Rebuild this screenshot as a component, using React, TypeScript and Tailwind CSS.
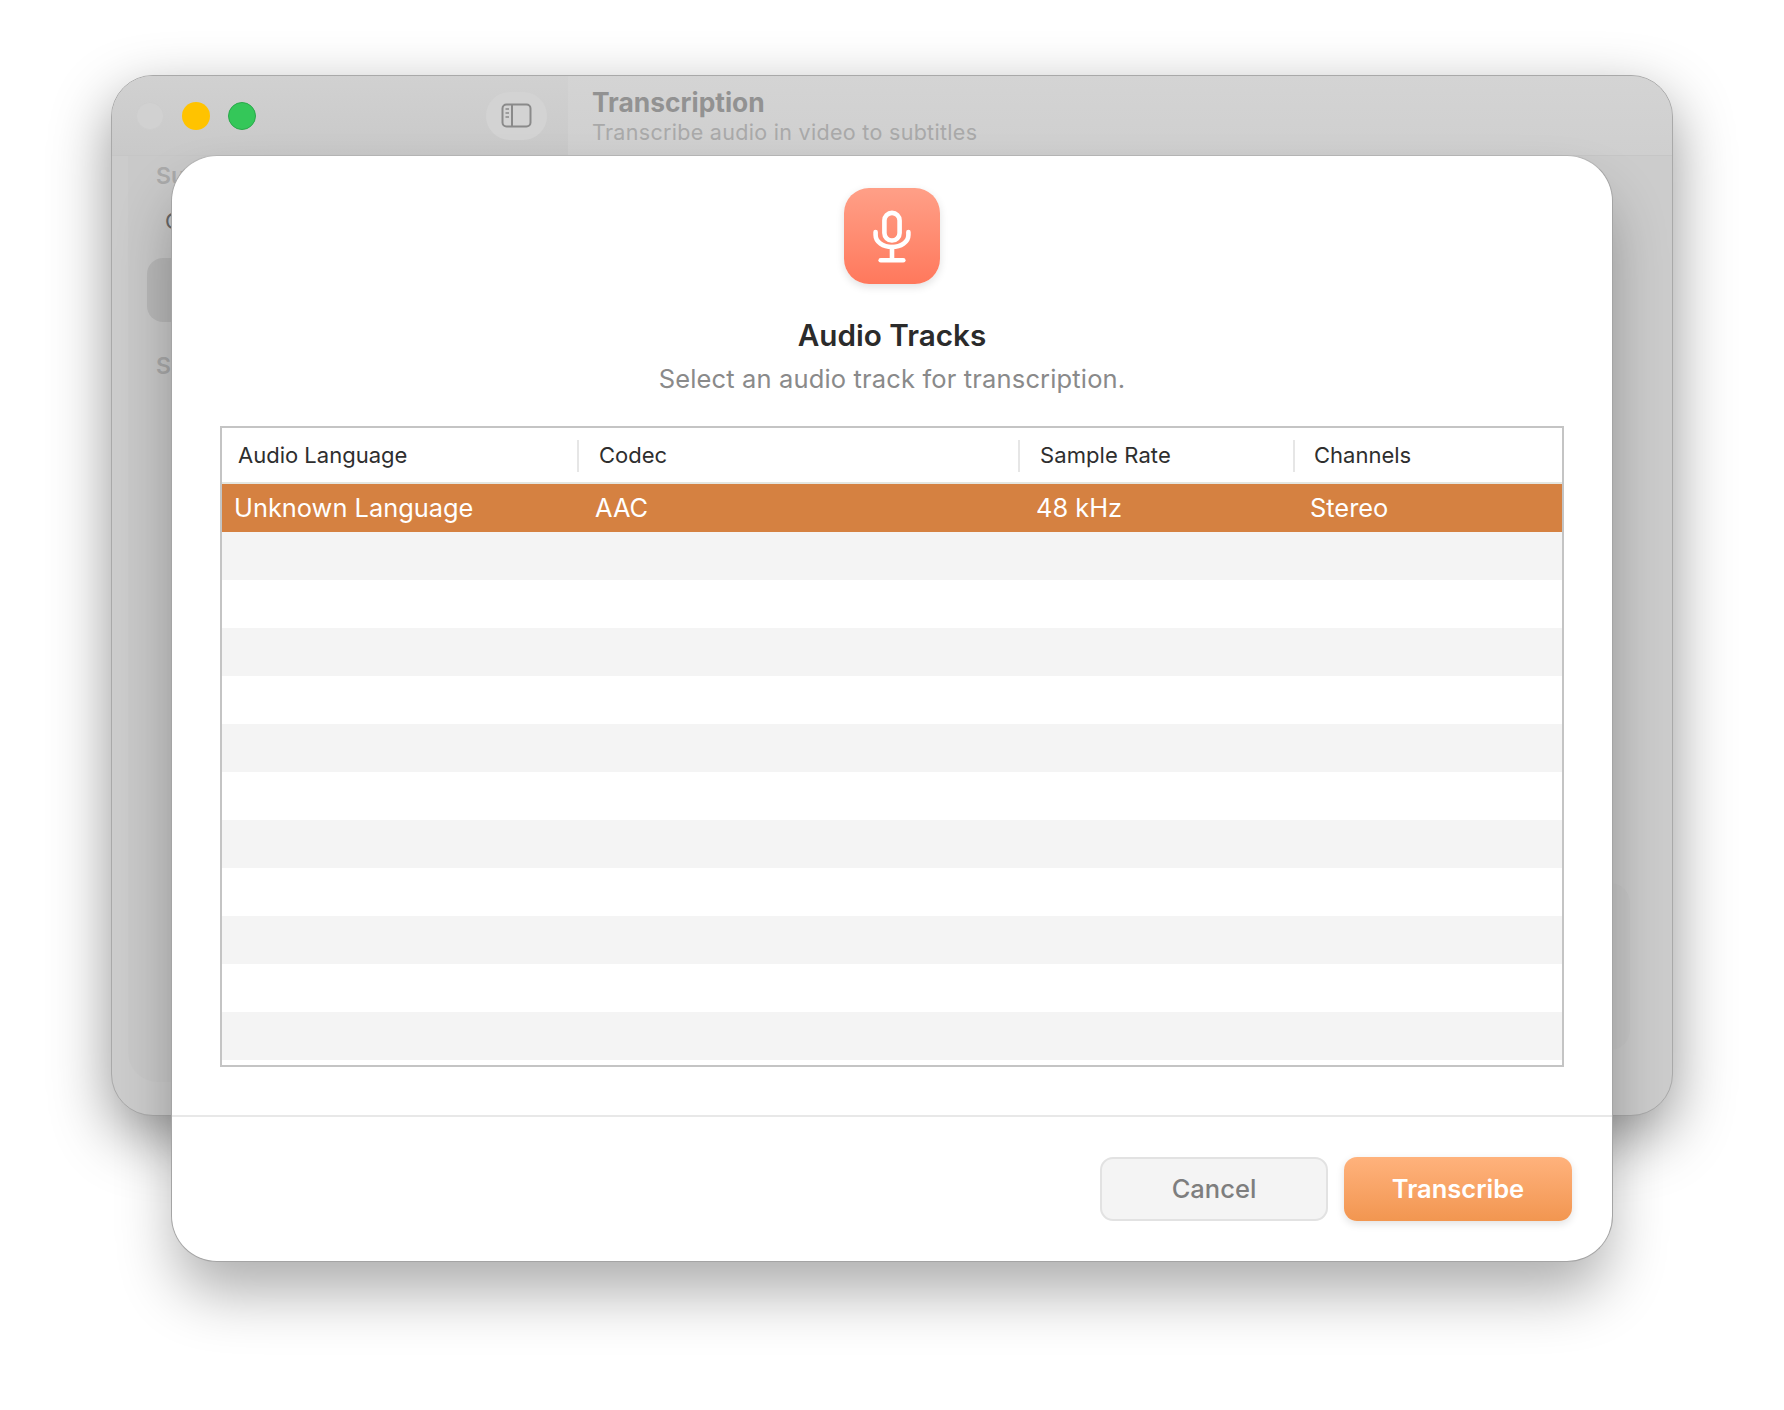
export default function App() {
  const rows = Array.from({ length: 11 }, (_, i) => i);
  return (
    <div className="w-[1784px] h-[1410px] bg-white flex justify-center pt-[75px] font-['Inter','Liberation_Sans',sans-serif]">
      <div className="relative w-[1562px] h-[1041px]">
        {/* Background window */}
        <div className="w-full h-full flex flex-col rounded-[42px] overflow-hidden bg-[#cccccc] border border-[#a9a9a9] shadow-[0_22px_60px_rgba(0,0,0,0.42)]">
          <div className="h-[80px] shrink-0 flex bg-linear-to-b from-[#d4d4d4] to-[#cfcfcf] border-b border-[#c6c6c6]">
            <div className="w-[456px] shrink-0 flex items-center pl-[24px] bg-linear-to-b from-[#d1d1d1] to-[#c9c9c9]">
              <div className="flex gap-[18px]">
                <div className="w-[28px] h-[28px] rounded-full bg-[#d1d1d1] border border-[#cdcdcd]" />
                <div className="w-[28px] h-[28px] rounded-full bg-[#ffc300]" />
                <div className="w-[28px] h-[28px] rounded-full bg-[#34c759] border border-[#2aa84a]" />
              </div>
              <div className="ml-[230px] w-[61px] h-[48px] rounded-full bg-[#d3d3d3] flex items-center justify-center">
                <svg width="31" height="25" viewBox="0 0 31 25" fill="none" stroke="#8a8a8a" strokeWidth="2">
                  <rect x="1.5" y="1.5" width="28" height="22" rx="4" />
                  <line x1="11" y1="1.5" x2="11" y2="23.5" />
                  <line x1="4.5" y1="6" x2="8" y2="6" strokeWidth="1.5" />
                  <line x1="4.5" y1="10" x2="8" y2="10" strokeWidth="1.5" />
                  <line x1="4.5" y1="14" x2="8" y2="14" strokeWidth="1.5" />
                </svg>
              </div>
            </div>
            <div className="flex-1 pl-[24px] pt-[10px]">
              <div className="text-[26.4px] leading-[32px] font-bold text-[#929292]">Transcription</div>
              <div className="mt-[1px] text-[21.5px] leading-[26px] text-[#a9a9a9] tracking-[0.3px]">Transcribe audio in video to subtitles</div>
            </div>
          </div>
          <div className="flex-1 flex min-h-0">
            <div className="w-[456px] shrink-0 pl-[16px] pb-[33px] flex">
              <div className="flex-1 rounded-bl-[30px] bg-[#c9c9c9] pl-[28px] pt-[6px] flex flex-col">
                <div className="text-[23px] leading-[28px] font-semibold text-[#aaaaaa]">Subtitles</div>
                <div className="mt-[17px] pl-[9px] text-[22px] leading-[28px] text-[#666666]">Current</div>
                <div className="-ml-[9px] mt-[23px] h-[64px] rounded-[16px] bg-[#b9b9b9]" />
                <div className="mt-[30px] text-[23px] leading-[28px] font-semibold text-[#aaaaaa]">Source</div>
              </div>
            </div>
            <div className="flex-1 flex flex-col justify-end items-end pr-[42px] pb-[65px]">
              <div className="w-[300px] h-[167px] rounded-[20px] bg-[#c9c9c9]" />
            </div>
          </div>
        </div>

        {/* Sheet */}
        <div className="absolute left-[60px] top-[80px] w-[1442px] h-[1107px] flex flex-col rounded-[46px] bg-white border border-[#a4a4a4] border-t-[#b4b4b4] shadow-[0_36px_60px_-6px_rgba(0,0,0,0.32)]">
          <div className="flex flex-col items-center pt-[32px]">
            <div className="w-[96px] h-[96px] rounded-[25px] bg-linear-to-b from-[#ff9f87] to-[#ff785c] shadow-[0_3px_8px_rgba(0,0,0,0.12)] flex items-center justify-center">
              <svg width="40" height="54" viewBox="0 0 40 54" fill="none" stroke="#ffffff" strokeWidth="4.6" strokeLinecap="round">
                <rect x="12.4" y="3.9" width="15.2" height="27.6" rx="7.6" />
                <path d="M3.6 23v3C3.6 33 11 38 20 38s16.4-5 16.4-12v-3" />
                <line x1="20" y1="38" x2="20" y2="50" />
                <line x1="8.7" y1="51.2" x2="31.3" y2="51.2" />
              </svg>
            </div>
            <div className="mt-[33px] h-[36px] text-[29.7px] leading-[36px] font-semibold text-[#2b2b2b]">Audio Tracks</div>
            <div className="mt-[8px] h-[36px] text-[25.5px] leading-[36px] tracking-[0.15px] text-[#8a8a8a]">Select an audio track for transcription.</div>
          </div>

          <div className="mt-[29px] mx-[48px] h-[641px] flex flex-col border-2 border-[#c4c4c4]">
            <div className="h-[54px] shrink-0 flex items-center text-[22px] text-[#2e2e2e] pt-[1px]">
              <div className="w-[355px] pl-[16px]">Audio Language</div>
              <div className="w-[441px] h-[32px] flex items-center pl-[20px] border-l-2 border-[#e6e6e6]">Codec</div>
              <div className="w-[275px] h-[32px] flex items-center pl-[20px] border-l-2 border-[#e6e6e6] tracking-[0.1px]">Sample Rate</div>
              <div className="flex-1 h-[32px] flex items-center pl-[19px] border-l-2 border-[#e6e6e6]">Channels</div>
            </div>
            <div className="h-[2px] shrink-0 bg-[#e4e6e0]" />
            <div className="h-[48px] shrink-0 flex items-center bg-[#d58141] text-white text-[25.4px]">
              <div className="w-[355px] pl-[12px]">Unknown Language</div>
              <div className="w-[441px] pl-[18px]">AAC</div>
              <div className="w-[275px] pl-[18px]">48 kHz</div>
              <div className="flex-1 pl-[17px]">Stereo</div>
            </div>
            {rows.map((i) => (
              <div key={i} className={i % 2 === 0 ? "h-[48px] shrink-0 bg-[#f4f4f4]" : "h-[48px] shrink-0 bg-white"} />
            ))}
          </div>

          <div className="mt-[48px] border-t-2 border-[#e8e8e8] flex justify-end gap-[16px] pt-[40px] pr-[40px]">
            <button className="w-[228px] h-[64px] rounded-[13px] border-2 border-[#e2e2e2] bg-[#f4f4f4] text-[25.5px] font-medium text-[#7e7e7e]">Cancel</button>
            <button className="w-[228px] h-[64px] rounded-[13px] bg-linear-to-b from-[#ffb27c] to-[#f29650] shadow-[0_3px_8px_rgba(0,0,0,0.12)] text-[25.5px] font-semibold text-white">Transcribe</button>
          </div>
        </div>
      </div>
    </div>
  );
}
